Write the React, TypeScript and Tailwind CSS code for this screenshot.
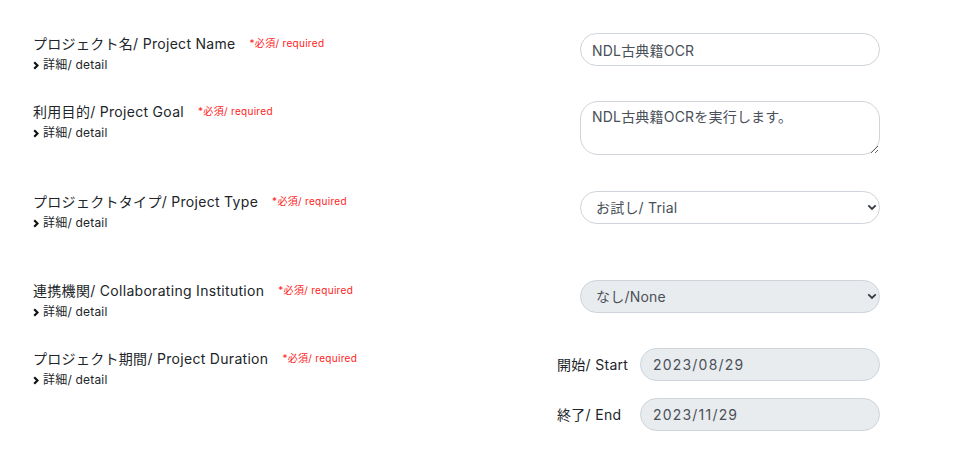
const font = { fontFamily: 'Inter, "Noto Sans CJK JP", sans-serif' };

const rows = [
  { label: "プロジェクト名/ Project Name", kind: "input", value: "NDL古典籍OCR", h: "h-[68px]" },
  { label: "利用目的/ Project Goal", kind: "textarea", value: "NDL古典籍OCRを実行します。", h: "h-[90px]" },
  { label: "プロジェクトタイプ/ Project Type", kind: "select", value: "お試し/ Trial", h: "h-[89px]" },
  { label: "連携機関/ Collaborating Institution", kind: "select-disabled", value: "なし/None", h: "h-[68px]" },
];

function Chevron() {
  return (
    <svg width="6" height="9" viewBox="0 0 6 9" className="mr-[4px]">
      <path d="M1.2 1.2 L4.5 4.5 L1.2 7.8" fill="none" stroke="#111" strokeWidth="2.2" />
    </svg>
  );
}

function LabelBlock({ label }: { label: string }) {
  return (
    <div className="flex-1 pl-[33px]">
      <div className="flex h-[20px] items-center">
        <span className="text-[14px] tracking-[0.3px] text-[#212529]">{label}</span>
        <span className="ml-[14px] text-[10px] tracking-[0.3px] text-[#ff1a1a]">*必須/ required</span>
      </div>
      <div className="mt-[4px] flex h-[16px] items-center text-[12px] tracking-[0.2px] text-[#212529]">
        <Chevron />
        詳細/ detail
      </div>
    </div>
  );
}

function SelectBox({ value, disabled }: { value: string; disabled?: boolean }) {
  return (
    <div className="relative">
      <select
        defaultValue={value}
        disabled={disabled}
        className={`h-[33px] w-full appearance-none rounded-full border border-[#ced4da] pl-[15px] text-[14px] tracking-[0.2px] text-[#495057] ${disabled ? "bg-[#e9ecef]" : "bg-white"}`}
        style={font}
      >
        <option>{value}</option>
      </select>
      <svg width="10" height="7" viewBox="0 0 10 7" className="pointer-events-none absolute right-[3px] top-[13px]">
        <path d="M1.3 1.3 L5 5 L8.7 1.3" fill="none" stroke="#343a40" strokeWidth="1.8" />
      </svg>
    </div>
  );
}

export default function App() {
  return (
    <div className="min-h-[457px] w-[956px] bg-white pt-[33px]" style={font}>
      {rows.map((r) => (
        <div key={r.label} className={`flex items-start ${r.h}`}>
          <LabelBlock label={r.label} />
          <div className="mr-[76px] w-[300px]">
            {r.kind === "input" && (
              <input
                defaultValue={r.value}
                className="h-[33px] w-full rounded-full border border-[#ced4da] bg-white px-[11px] text-[14px] tracking-[0.2px] text-[#495057] outline-none"
                style={font}
              />
            )}
            {r.kind === "textarea" && (
              <textarea
                defaultValue={r.value}
                className="block h-[54px] w-full rounded-[18px] border border-[#ced4da] bg-white px-[11px] pt-[5px] text-[14px] leading-[20px] tracking-[0.2px] text-[#495057] outline-none"
                style={font}
              />
            )}
            {r.kind === "select" && <SelectBox value={r.value} />}
            {r.kind === "select-disabled" && <SelectBox value={r.value} disabled />}
          </div>
        </div>
      ))}

      <div className="flex items-start">
        <LabelBlock label="プロジェクト期間/ Project Duration" />
        <div className="mr-[76px] flex w-[323px] flex-col gap-[17px]">
          {[
            { l: "開始/ Start", v: "2023/08/29" },
            { l: "終了/ End", v: "2023/11/29" },
          ].map((d) => (
            <div key={d.l} className="flex items-center">
              <span className="w-[83px] shrink-0 text-[14px] tracking-[0.3px] text-[#212529]">{d.l}</span>
              <input
                readOnly
                defaultValue={d.v}
                className="h-[33px] min-w-0 flex-1 rounded-full border border-[#ced4da] bg-[#e9ecef] px-[12px] text-[14px] tracking-[1.2px] text-[#495057] outline-none"
                style={font}
              />
            </div>
          ))}
        </div>
      </div>
    </div>
  );
}
